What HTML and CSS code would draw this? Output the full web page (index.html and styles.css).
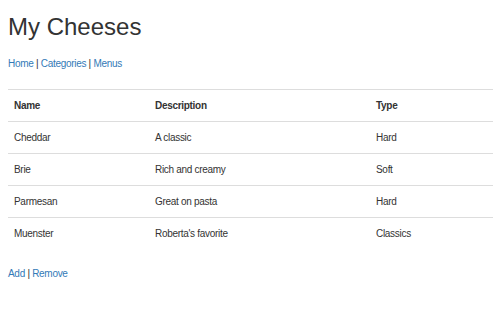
FILE: index.html
```html
<!DOCTYPE html>
<html lang="en">
<head>
<meta charset="utf-8">
<title>My Cheeses</title>
<link rel="stylesheet" href="styles.css">
</head>
<body>
<div class="page">
  <h1 class="title">My Cheeses</h1>
  <nav class="nav">
    <a href="#">Home</a> | <a href="#">Categories</a> | <a href="#">Menus</a>
  </nav>
  <table class="cheeses">
    <colgroup>
      <col class="c-name">
      <col class="c-desc">
      <col class="c-type">
    </colgroup>
    <thead>
      <tr><th>Name</th><th>Description</th><th>Type</th></tr>
    </thead>
    <tbody>
      <tr><td>Cheddar</td><td>A classic</td><td>Hard</td></tr>
      <tr><td>Brie</td><td>Rich and creamy</td><td>Soft</td></tr>
      <tr><td>Parmesan</td><td>Great on pasta</td><td>Hard</td></tr>
      <tr><td>Muenster</td><td>Roberta's favorite</td><td>Classics</td></tr>
    </tbody>
  </table>
  <div class="actions">
    <a href="#">Add</a> | <a href="#">Remove</a>
  </div>
</div>
</body>
</html>
```
FILE: styles.css
```css
html, body {
  margin: 0;
  padding: 0;
  background: #fff;
}
body {
  font-family: "Liberation Sans", Arial, sans-serif;
  color: #333;
  font-size: 10px;
  letter-spacing: -0.3px;
}
.page {
  padding: 14px 7px 0 8px;
}
.title {
  margin: 0;
  font-size: 24px;
  line-height: 26px;
  font-weight: normal;
  letter-spacing: 0;
  color: #333;
}
.nav {
  margin-top: 17px;
  line-height: 14px;
}
a {
  color: #337ab7;
  text-decoration: none;
}
.cheeses {
  margin-top: 18px;
  width: 100%;
  border-collapse: collapse;
  border-spacing: 0;
}
.c-name { width: 141px; }
.c-desc { width: 221px; }
.c-type { width: auto; }
.cheeses th,
.cheeses td {
  text-align: left;
  padding: 8px 6px;
  line-height: 15px;
  border-top: 1px solid #ddd;
  vertical-align: top;
}
.cheeses th {
  font-weight: bold;
}
.actions {
  margin-top: 18px;
  line-height: 14px;
}
```
